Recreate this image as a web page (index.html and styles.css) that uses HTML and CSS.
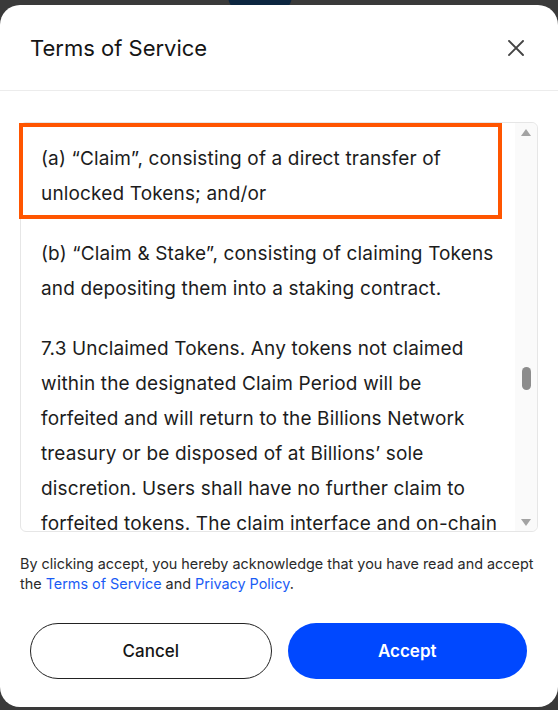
FILE: index.html
```html
<!DOCTYPE html>
<html lang="en">
<head>
<meta charset="utf-8">
<title>Terms of Service</title>
<link rel="stylesheet" href="styles.css">
</head>
<body>
<div class="backdrop-logo"></div>
<div class="modal">
  <header class="modal-header">
    <h1 class="modal-title">Terms of Service</h1>
    <button class="close-btn" aria-label="Close">
      <svg width="16" height="16" viewBox="0 0 16 16"><path d="M1 1L15 15M15 1L1 15" stroke="#444" stroke-width="1.9" stroke-linecap="square" fill="none"/></svg>
    </button>
  </header>
  <div class="modal-body">
    <div class="terms-box">
      <div class="terms-content">
        <p>(a) “Claim”, consisting of a direct transfer of unlocked Tokens; and/or</p>
        <p>(b) “Claim &amp; Stake”, consisting of claiming Tokens and depositing them into a staking contract.</p>
        <p>7.3 Unclaimed Tokens. Any tokens not claimed within the designated Claim Period will be forfeited and will return to the Billions Network treasury or be disposed of at Billions’ sole discretion. Users shall have no further claim to forfeited tokens. The claim interface and on-chain records shall be conclusive as to whether Tokens were claimed.</p>
      </div>
      <div class="scrollbar">
        <span class="arrow-up"></span>
        <span class="thumb"></span>
        <span class="arrow-down"></span>
      </div>
      <div class="highlight"></div>
    </div>
    <p class="note">By clicking accept, you hereby acknowledge that you have read and accept the <a href="#">Terms of Service</a> and <a href="#">Privacy Policy</a>.</p>
  </div>
  <footer class="modal-actions">
    <button class="btn btn-cancel">Cancel</button>
    <button class="btn btn-accept">Accept</button>
  </footer>
</div>
</body>
</html>
```

FILE: styles.css
```css
* { box-sizing: border-box; }
html, body {
  margin: 0;
  padding: 0;
  background: #3a3a3a;
  font-family: Inter, "Noto Sans", "Liberation Sans", sans-serif;
  overflow: hidden;
}
body {
  position: relative;
  height: 710px;
  padding-top: 5px;
}
.backdrop-logo {
  position: absolute;
  left: 227px;
  top: -43px;
  width: 66px;
  height: 66px;
  border-radius: 50%;
  background: #0c2640;
}
.modal {
  position: relative;
  width: 558px;
  height: 702px;
  background: #fff;
  border-radius: 20px;
  display: flex;
  flex-direction: column;
}
.modal-header {
  height: 86px;
  border-bottom: 1px solid #ececec;
  display: flex;
  align-items: center;
  justify-content: space-between;
  padding: 0 34px 0 30px;
}
.modal-title {
  margin: 0;
  font-size: 22px;
  font-weight: 400;
  color: #151515;
  letter-spacing: 0;
}
.close-btn {
  border: 0;
  background: none;
  padding: 0;
  width: 16px;
  height: 16px;
  display: flex;
}
.modal-body {
  padding: 31px 20px 0;
}
.terms-box {
  position: relative;
  height: 410px;
  border: 1px solid #e6e6e6;
  border-radius: 6px;
  display: flex;
}
.terms-content {
  flex: 1;
  overflow: hidden;
  padding: 18px 16px 0 20px;
  color: #1c1c1c;
  font-size: 19px;
  letter-spacing: 0.15px;
  line-height: 35px;
}
.terms-content p {
  margin: 0 0 25px;
}
.scrollbar {
  width: 22px;
  background: #fafafa;
  border-radius: 0 6px 6px 0;
  display: flex;
  flex-direction: column;
  align-items: center;
  padding: 6px 0 5px;
}
.arrow-up {
  width: 0;
  height: 0;
  border-left: 5.5px solid transparent;
  border-right: 5.5px solid transparent;
  border-bottom: 7px solid #a3a3a3;
}
.thumb {
  margin-top: 231px;
  width: 9px;
  height: 23px;
  border-radius: 5px;
  background: #8c8c8c;
}
.arrow-down {
  margin-top: auto;
  width: 0;
  height: 0;
  border-left: 5.5px solid transparent;
  border-right: 5.5px solid transparent;
  border-top: 7px solid #a3a3a3;
}
.highlight {
  position: absolute;
  left: -2px;
  top: 0;
  width: 483px;
  height: 96px;
  border: 4px solid #ff5500;
  pointer-events: none;
}
.note {
  margin: 22px 0 0;
  font-size: 14.4px;
  line-height: 20px;
  color: #2a2a2a;
}
.note a {
  color: #1a5cf5;
  text-decoration: none;
}
.modal-actions {
  margin-top: 29px;
  display: flex;
  gap: 16px;
  padding: 0 31px 0 30px;
}
.btn {
  flex: 1;
  height: 56px;
  border-radius: 28px;
  font-family: inherit;
  font-size: 17px;
  cursor: pointer;
}
.btn-cancel {
  background: #fff;
  border: 1px solid #222;
  color: #151515;
  font-weight: 500;
}
.btn-accept {
  background: #0048ff;
  border: 0;
  color: #fff;
  font-weight: 600;
}
```
